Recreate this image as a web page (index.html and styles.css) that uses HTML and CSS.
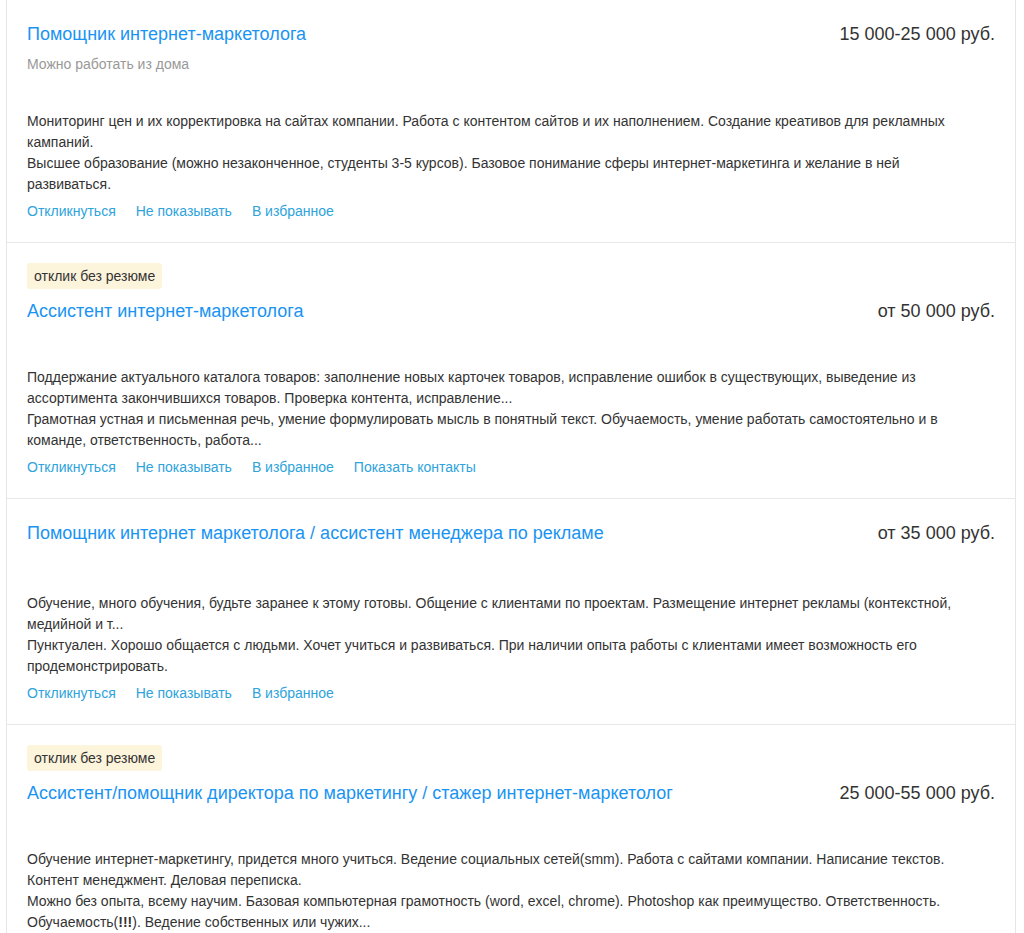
FILE: index.html
```html
<!DOCTYPE html>
<html lang="ru">
<head>
<meta charset="utf-8">
<title>Вакансии</title>
<link rel="stylesheet" href="styles.css">
</head>
<body>
<div class="list">
  <div class="vacancy">
    <div class="head">
      <a class="title" href="#">Помощник интернет-маркетолога</a>
      <div class="salary">15 000-25 000 руб.</div>
    </div>
    <div class="remote">Можно работать из дома</div>
    <div class="desc desc-after-remote">
      <p>Мониторинг цен и их корректировка на сайтах компании. Работа с контентом сайтов и их наполнением. Создание креативов для рекламных кампаний.</p>
      <p>Высшее образование (можно незаконченное, студенты 3-5 курсов). Базовое понимание сферы интернет-маркетинга и желание в ней развиваться.</p>
    </div>
    <div class="actions">
      <a href="#">Откликнуться</a>
      <a href="#">Не показывать</a>
      <a href="#">В избранное</a>
    </div>
  </div>

  <div class="vacancy">
    <span class="badge">отклик без резюме</span>
    <div class="head">
      <a class="title" href="#">Ассистент интернет-маркетолога</a>
      <div class="salary">от 50 000 руб.</div>
    </div>
    <div class="desc">
      <p>Поддержание актуального каталога товаров: заполнение новых карточек товаров, исправление ошибок в существующих, выведение из ассортимента закончившихся товаров. Проверка контента, исправление...</p>
      <p>Грамотная устная и письменная речь, умение формулировать мысль в понятный текст. Обучаемость, умение работать самостоятельно и в команде, ответственность, работа...</p>
    </div>
    <div class="actions">
      <a href="#">Откликнуться</a>
      <a href="#">Не показывать</a>
      <a href="#">В избранное</a>
      <a href="#">Показать контакты</a>
    </div>
  </div>

  <div class="vacancy">
    <div class="head">
      <a class="title" href="#">Помощник интернет маркетолога / ассистент менеджера по рекламе</a>
      <div class="salary">от 35 000 руб.</div>
    </div>
    <div class="desc desc-wide-gap">
      <p>Обучение, много обучения, будьте заранее к этому готовы. Общение с клиентами по проектам. Размещение интернет рекламы (контекстной, медийной и т...</p>
      <p>Пунктуален. Хорошо общается с людьми. Хочет учиться и развиваться. При наличии опыта работы с клиентами имеет возможность его продемонстрировать.</p>
    </div>
    <div class="actions">
      <a href="#">Откликнуться</a>
      <a href="#">Не показывать</a>
      <a href="#">В избранное</a>
    </div>
  </div>

  <div class="vacancy">
    <span class="badge">отклик без резюме</span>
    <div class="head">
      <a class="title" href="#">Ассистент/помощник директора по маркетингу / стажер интернет-маркетолог</a>
      <div class="salary">25 000-55 000 руб.</div>
    </div>
    <div class="desc">
      <p>Обучение интернет-маркетингу, придется много учиться. Ведение социальных сетей(smm). Работа с сайтами компании. Написание текстов. Контент менеджмент. Деловая переписка.</p>
      <p>Можно без опыта, всему научим. Базовая компьютерная грамотность (word, excel, chrome). Photoshop как преимущество. Ответственность. Обучаемость(<span class="em">!!!</span>). Ведение собственных или чужих...</p>
    </div>
    <div class="actions">
      <a href="#">Откликнуться</a>
      <a href="#">Не показывать</a>
      <a href="#">В избранное</a>
    </div>
  </div>
</div>
</body>
</html>
```

FILE: styles.css
```css
html, body {
  margin: 0;
  padding: 0;
  background: #fff;
}

body {
  font-family: "Liberation Sans", Arial, sans-serif;
  color: #333;
}

/* bordered column holding the vacancy cards */
.list {
  margin-left: 6px;
  width: 1008px;
  border-left: 1px solid #e6e6e6;
  border-right: 1px solid #e6e6e6;
}

.vacancy {
  padding: 20px;
  border-bottom: 1px solid #e8e8e8;
}

.badge {
  display: inline-block;
  background: #fdf4dc;
  border-radius: 3px;
  padding: 4px 7px;
  font-size: 14px;
  line-height: 18px;
  color: #333;
  margin-bottom: 8px;
}

.head {
  display: flex;
  justify-content: space-between;
  align-items: baseline;
  margin-top: 3px;
  gap: 20px;
}

.title {
  font-size: 18px;
  line-height: 22px;
  color: #1a94f2;
  text-decoration: none;
}

.salary {
  font-size: 18px;
  line-height: 22px;
  color: #333;
  white-space: nowrap;
}

.remote {
  margin-top: 9px;
  font-size: 14px;
  line-height: 20px;
  color: #999;
}

.desc {
  margin-top: 45px;
  max-width: 930px;
  font-size: 14px;
  line-height: 21px;
  color: #333;
}

.desc-after-remote {
  margin-top: 37px;
}

.desc-wide-gap {
  margin-top: 49px;
}

.desc p {
  margin: 0;
}

.desc .em {
  font-weight: bold;
}

.actions {
  display: flex;
  gap: 20px;
  margin-top: 6px;
  font-size: 14px;
  line-height: 21px;
}

.actions a {
  color: #2ea3dc;
  text-decoration: none;
}
```
